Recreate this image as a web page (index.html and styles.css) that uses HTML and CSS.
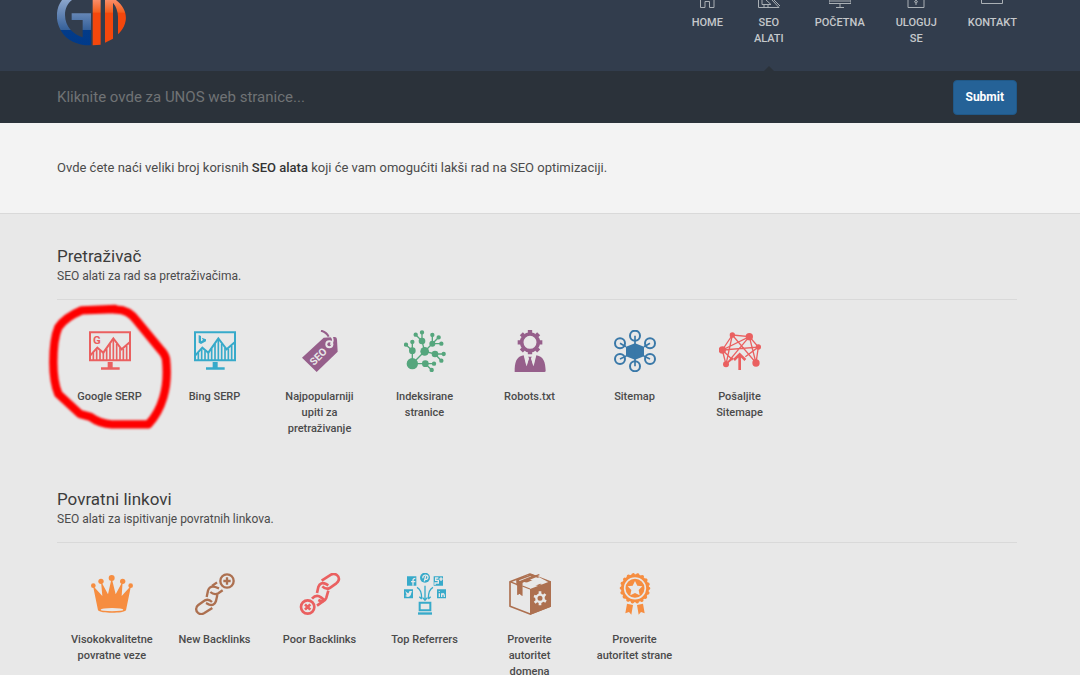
FILE: index.html
```html
<!DOCTYPE html>
<html lang="sr-Latn">
<head>
<meta charset="utf-8">
<meta name="viewport" content="width=device-width, initial-scale=1">
<title>SEO alati</title>
<link rel="stylesheet" href="styles.css">
</head>
<body>
<header class="header">
  <div class="wrap header-row">
    <a class="logo" href="#" aria-label="GIN">
      <svg viewBox="51 0 207 138" width="69" height="46">
        <defs>
          <linearGradient id="blue" x1="0" y1="0" x2="0" y2="1"><stop offset="0" stop-color="#8ba5cc"/><stop offset=".66" stop-color="#356099"/><stop offset=".67" stop-color="#033b88"/><stop offset="1" stop-color="#003a8a"/></linearGradient>
          <linearGradient id="orange" gradientUnits="userSpaceOnUse" x1="0" y1="0" x2="0" y2="138"><stop offset="0" stop-color="#f98d68"/><stop offset=".26" stop-color="#f4601f"/><stop offset=".29" stop-color="#f4470c"/><stop offset="1" stop-color="#f4470c"/></linearGradient>
        </defs>
        <path fill="url(#blue)" d="M66 0C46 25 46 65 63 92C80 122 115 137 153 136V40H95V60H128V112C100 103 75 80 75 45C75 25 83 10 96 0Z"/>
        <path fill="url(#orange)" d="M158 0H182V134L158 136ZM195 0H228C267 30 266 72 234 103V50Q233 25 219 8V116L195 128Z"/>
      </svg>
    </a>
    <nav class="nav">
      <a href="#"><svg viewBox="0 0 22 8" width="22" height="8"><path d="M4.500 0V7.500H9V1.500H13.500V7.500H18V0"/></svg>HOME</a>
      <a href="#" class="active"><svg viewBox="0 0 22 8" width="22" height="8"><path d="M.5 0V7.500H21L14 0M4 0V4.500H13L8 0M10 7V5M6 7V5M16 0L22 6"/></svg>SEO ALATI</a>
      <a href="#"><svg viewBox="0 0 22 8" width="22" height="8"><path d="M0 0V3.500H22V0M0 1H22M11 4V7M7 7.500H15"/></svg>POČETNA</a>
      <a href="#"><svg viewBox="0 0 22 8" width="22" height="8"><path d="M3 0V7.500H19V0M11 0L9.500 2L11 3L12.500 2ZM11 3V5"/></svg>ULOGUJ SE</a>
      <a href="#"><svg viewBox="0 0 22 8" width="22" height="8"><path d="M.5 0V3.500H21.500V0"/></svg>KONTAKT</a>
    </nav>
  </div>
</header>
<div class="urlbar">
  <form class="wrap urlbar-row">
    <input class="url" type="text" aria-label="Web stranica" placeholder="Kliknite ovde za UNOS web stranice...">
    <button class="submit" type="submit">Submit</button>
  </form>
</div>
<div class="intro"><p class="wrap">Ovde ćete naći veliki broj korisnih <strong>SEO alata</strong> koji će vam omogućiti lakši rad na SEO optimizaciji.</p></div>
<main class="wrap main">
  <section class="group">
    <h2>Pretraživač</h2>
    <p class="sub">SEO alati za rad sa pretraživačima.</p>
    <ul class="tools">
      <li class="marked"><a href="#">
        <svg class="icon red" viewBox="0 0 126 126"><g class="line"><path d="M3 7H123V91H3Z" stroke-width="6"/><path d="M4 76L25 53L43 68L73 25L98 58L123 36" stroke-width="6"/><path d="M13 68V90M23 58V90M33 62V90M43 68V90M53 56V90M63 42V90M73 28V90M83 42V90M93 54V90M103 57V90M113 48V90" stroke-width="5"/></g><path d="M56 96H71V112H92V119H36V112H56Z"/><text x="12" y="42" font-size="34">G</text></svg>
        Google SERP</a>
        <svg class="marker" viewBox="0 0 660 420" aria-hidden="true"><path d="M225 30L125 34Q75 55 55 85Q40 120 40 190Q40 250 55 285L120 345L150 353Q180 375 215 376H325Q355 345 370 295Q385 245 378 180Q375 165 360 150L290 65Q265 30 225 32Z"/></svg>
      </li>
      <li><a href="#">
        <svg class="icon cyan" viewBox="0 0 126 126"><g class="line"><path d="M3 7H123V91H3Z" stroke-width="6"/><path d="M4 76L25 53L43 68L73 25L98 58L123 36" stroke-width="6"/><path d="M13 68V90M23 58V90M33 62V90M43 68V90M53 56V90M63 42V90M73 28V90M83 42V90M93 54V90M103 57V90M113 48V90" stroke-width="5"/></g><path d="M14 15L21 18V34L27 30L23 23L36 28V34L21 42L14 38Z"/><path d="M56 96H71V112H92V119H36V112H56Z"/></svg>
        Bing SERP</a></li>
      <li><a href="#">
        <svg class="icon purple" viewBox="0 0 126 126"><path d="M9 83L74 23L108 21Q114 21 114 29L116 65L53 126Z"/><circle class="bg" cx="91" cy="43" r="12"/><circle cx="91" cy="43" r="6"/><path class="line cut" d="M87 10C102 19 107 34 94 44" stroke-width="5"/><path class="line" d="M66 2Q82 6 89 20" stroke-width="6"/><text class="bg" x="58" y="80" text-anchor="middle" dominant-baseline="central" font-size="31" transform="rotate(-45 58 80)">SEO</text></svg>
        Najpopularniji upiti za pretraživanje</a></li>
      <li><a href="#">
        <svg class="icon green" viewBox="0 0 126 126"><path class="line" stroke-width="4" d="M25 101L62 64L54 33L35 14M54 33V7M62 64L85 41V15M85 41L104 22M85 41H112M62 64L93 72H120M93 72L112 92M25 101V36M25 62L6 44M25 101H90M64 101L83 120"/><circle cx="25" cy="101" r="17"/><circle cx="62" cy="64" r="13"/><circle cx="25" cy="62" r="10"/><circle cx="54" cy="33" r="10"/><circle cx="85" cy="41" r="9"/><circle cx="93" cy="72" r="10"/><circle cx="64" cy="101" r="10"/><path class="line" stroke-width="13" d="M6 44h.1M25 36h.1M35 14h.1M54 7h.1M85 15h.1M104 22h.1M112 41h.1M119 72h.1M112 92h.1M90 101h.1M83 120h.1" stroke-linecap="round"/></svg>
        Indeksirane stranice</a></li>
      <li><a href="#">
        <svg class="icon purple" viewBox="0 0 126 126"><g class="line"><circle cx="63" cy="37" r="25" stroke-width="11"/><path stroke-width="13" d="M63 0V10M63 64V73M26 37H36M90 37H100M37 11L43 17M83 57L89 63M89 11L83 17M43 57L37 63"/></g><path d="M17 126C17 98 21 80 44 76L52 108L59 87L57 80H69L67 87L74 108L82 76C105 80 109 98 110 122Q110 126 106 126Z"/><path class="bg" d="M46 76L53 109L60 85L56 78ZM80 76L73 109L66 85L70 78Z"/></svg>
        Robots.txt</a></li>
      <li><a href="#">
        <svg class="icon blue" viewBox="0 0 126 126"><path d="M63 40L90 50V79L63 89L36 79V50Z"/><g class="line" stroke-width="6"><circle cx="63" cy="17" r="15"/><circle cx="18" cy="40" r="15"/><circle cx="108" cy="40" r="15"/><circle cx="18" cy="87" r="15"/><circle cx="108" cy="87" r="15"/><circle cx="63" cy="109" r="15"/><path d="M63 17V109M18 40L36 50M108 40L90 50M18 87L37 78M108 87L89 78" stroke-width="5"/></g></svg>
        Sitemap</a></li>
      <li><a href="#">
        <svg class="icon red" viewBox="0 0 126 126"><g class="line"><path stroke-width="4" d="M40 15L91 20L118 51L111 99L40 15L21 103L10 60L40 15M10 60L91 20L111 99M10 60L118 51L79 80M91 20L21 103M21 103L43 84M10 60L41 90"/><path stroke-width="8" d="M62 120V74M45 90L62 73L79 90"/></g><circle cx="40" cy="15" r="8"/><circle cx="91" cy="20" r="11"/><circle cx="118" cy="51" r="8"/><circle cx="111" cy="99" r="11"/><circle cx="21" cy="103" r="9"/><circle cx="10" cy="60" r="11"/></svg>
        Pošaljite Sitemape</a></li>
    </ul>
  </section>
  <section class="group">
    <h2>Povratni linkovi</h2>
    <p class="sub">SEO alati za ispitivanje povratnih linkova.</p>
    <ul class="tools">
      <li><a href="#">
        <svg class="icon gold" viewBox="0 0 126 126"><path d="M6 38L34 69L30 25L51 64L62 15L74 64L95 25L92 69L120 38L105 112C99 122 27 122 21 112Z"/><circle cx="7" cy="38" r="7"/><circle cx="30" cy="25" r="8"/><circle cx="62" cy="15" r="9"/><circle cx="95" cy="25" r="8"/><circle cx="119" cy="38" r="7"/><ellipse class="bg" cx="63" cy="110" rx="34" ry="5"/></svg>
        Visokokvalitetne povratne veze</a></li>
      <li><a href="#">
        <svg class="icon brown" viewBox="0 0 126 126"><g class="line" stroke-width="7"><circle cx="99" cy="24" r="20"/><path d="M99 13V35M88 24H110"/><path d="M55 105L30 121C18 128 4 118 7 105Q8 100 13 96L33 82Q44 77 54 87"/><path d="M38 72L42 53Q47 37 64 42L75 46M70 66L66 84Q60 101 44 94L36 90"/><path d="M49 57Q60 67 73 61L86 52M54 39L69 28"/></g></svg>
        New Backlinks</a></li>
      <li><a href="#">
        <svg class="icon red" viewBox="0 0 126 126"><g class="line" stroke-width="8"><circle cx="26" cy="102" r="20"/><path d="M18 94L34 110M34 94L18 110"/><path d="M68 23L96 5C108 -2 123 9 119 22Q117 27 112 31L92 45Q81 51 70 40"/><path d="M54 60L58 42Q64 25 81 33L88 37M88 53L82 74Q76 90 58 81"/><path d="M39 77Q52 62 66 73L76 81M54 98L75 83"/></g></svg>
        Poor Backlinks</a></li>
      <li><a href="#">
        <svg class="icon cyan" viewBox="0 0 126 126"><path d="M9 10H37V38H9ZM89 10H117V38H89ZM0 49H27V76H0ZM99 49H126V76H99Z"/><circle cx="63" cy="14" r="15"/><path class="line" stroke-width="6" d="M47 89H79V112H47Z"/><path d="M42 118H84V125H42Z"/><path class="line" stroke-width="4" d="M63 38V82M56 74L63 82L70 74M39 43Q53 50 53 76M46 71L53 78M87 43Q73 50 73 76M80 71L73 78"/><g class="line cut" stroke-width="4"><path d="M27 38V22Q27 16 34 16M21 26H34M61 25L65 9M57 16C53 5 73 3 72 13Q70 22 63 18"/><path d="M103 15H95V22H103V30H93V36M106 18H116M111 13V24M106 72V61M113 72V61M113 65Q121 57 121 72M106 55V57"/></g><path class="bg" d="M4 54Q10 61 14 61Q14 53 20 54L25 55L22 59Q21 71 11 72L3 69L8 67Z"/></svg>
        Top Referrers</a></li>
      <li><a href="#">
        <svg class="icon brown" viewBox="0 0 126 126"><path class="line" stroke-width="5" stroke-linejoin="round" d="M63 3L3 26V100L63 123L123 100V26Z"/><path d="M63 48L126 24V101L63 126ZM23 20L43 12L98 33L88 39ZM22 20L40 27V69L32 62L25 66V38L22 36Z"/><path class="line" stroke-width="4" d="M3 26L25 35M40 39L63 48M38 28L82 10M36 24L91 5"/><path class="bg" d="M43 33L91 13L113 25L63 44ZM27 20L57 7L66 7L33 22Z"/><path d="M22 19L68 3L82 9L40 27V69L32 62L25 66V36Z"/><path class="bg" d="M30 22L65 9L67 10L32 24Z"/><g class="line cut"><circle cx="93" cy="76" r="11" stroke-width="7"/><path stroke-width="8" d="M93 55V65M93 87V97M75 69L83 72M103 81L111 86M77 89L84 83M103 70L109 63"/></g></svg>
        Proverite autoritet domena</a></li>
      <li><a href="#">
        <svg class="icon gold" viewBox="0 0 126 126"><circle cx="63" cy="46" r="42"/><circle class="line" cx="63" cy="46" r="41" stroke-width="10" stroke-dasharray=".1 14.210" stroke-linecap="round"/><circle class="line cut" cx="63" cy="46" r="31" stroke-width="5"/><path class="bg" d="M63 24L70 38L85 40L74 51L77 67L63 60L49 67L52 51L41 40L56 38Z"/><path d="M39 92L57 96L52 125L45 117L34 121ZM87 92L69 96L74 125L81 117L92 121Z"/></svg>
        Proverite autoritet strane</a></li>
    </ul>
  </section>
</main>
</body>
</html>
```
FILE: styles.css
```css
* { box-sizing: border-box; }
body {
  margin: 0;
  background: #e8e8e8;
  color: #4b4b4b;
  font-family: Roboto, "Liberation Sans", sans-serif;
  font-size: 12px;
  line-height: 16px;
}
h2, p, ul { margin: 0; padding: 0; }
a { color: inherit; text-decoration: none; }
.wrap { padding-left: 57px; padding-right: 63px; }

.header { background: #323d4d; }
.header-row {
  display: flex;
  justify-content: space-between;
  min-height: 71px;
}
.logo svg { display: block; }
.nav { display: flex; gap: 31px; }
.nav a {
  display: flex;
  flex-direction: column;
  align-items: center;
  gap: 7px;
  width: min-content;
  color: #c5c8cb;
  font-size: 11px;
  font-weight: 500;
  text-align: center;
}
.nav svg {
  display: block;
  fill: none;
  stroke: #aab0b5;
}
.nav .active { position: relative; }
.nav .active::after {
  content: "";
  position: absolute;
  bottom: 0;
  border: 5px solid transparent;
  border-top: 0;
  border-bottom-color: #2b323a;
}

.urlbar { background: #2b323a; }
.urlbar-row {
  display: flex;
  align-items: center;
  justify-content: space-between;
  min-height: 52px;
}
.url {
  flex: 1;
  min-width: 0;
  padding: 0;
  border: 0;
  outline: 0;
  background: transparent;
  color: #c5c8cb;
  font: 15px/20px Roboto, "Liberation Sans", sans-serif;
}
.url::placeholder { color: #707375; }
.submit {
  height: 35px;
  padding: 0 12px;
  border: 1px solid #205887;
  border-radius: 4px;
  background: #256297;
  color: #fff;
  font: 700 12px/16px Roboto, "Liberation Sans", sans-serif;
}

.intro {
  padding: 35px 0;
  border-bottom: 1px solid #d9d9d9;
  background: #f3f3f3;
  font-size: 13px;
  line-height: 20px;
}
.intro strong { color: #333; font-weight: 500; }

.main { padding-top: 30px; }
.group { margin-bottom: 50px; }
h2 {
  color: #3c3c3c;
  font-size: 17px;
  font-weight: 400;
  line-height: 24px;
}
.sub {
  padding-bottom: 15px;
  border-bottom: 1px solid #d9d9d9;
}
.tools {
  display: grid;
  grid-template-columns: repeat(auto-fill, 105px);
  padding-top: 30px;
  list-style: none;
}
.tools li { padding: 0 14px; }
.tools a {
  display: flex;
  flex-direction: column;
  align-items: center;
  gap: 17px;
  width: min-content;
  min-width: 100%;
  font-size: 11px;
  font-weight: 500;
  text-align: center;
}
.icon {
  width: 42px;
  height: 42px;
  fill: var(--ink);
  font-weight: 700;
}
.icon .line { fill: none; stroke: var(--ink); }
.icon .bg { fill: #e8e8e8; }
.icon .cut { stroke: #e8e8e8; }
.red { --ink: #ea6060; }
.cyan { --ink: #37aaca; }
.purple { --ink: #965f8b; }
.green { --ink: #55a67d; }
.blue { --ink: #3978a8; }
.gold { --ink: #f68d40; }
.brown { --ink: #ad7050; }

.marked { position: relative; }
.marker {
  position: absolute;
  top: -31px;
  left: -17px;
  width: 220px;
  height: 140px;
  fill: none;
  stroke: #fe0000;
  stroke-width: 25px;
  stroke-linejoin: round;
  filter: blur(1px);
  pointer-events: none;
}
```
